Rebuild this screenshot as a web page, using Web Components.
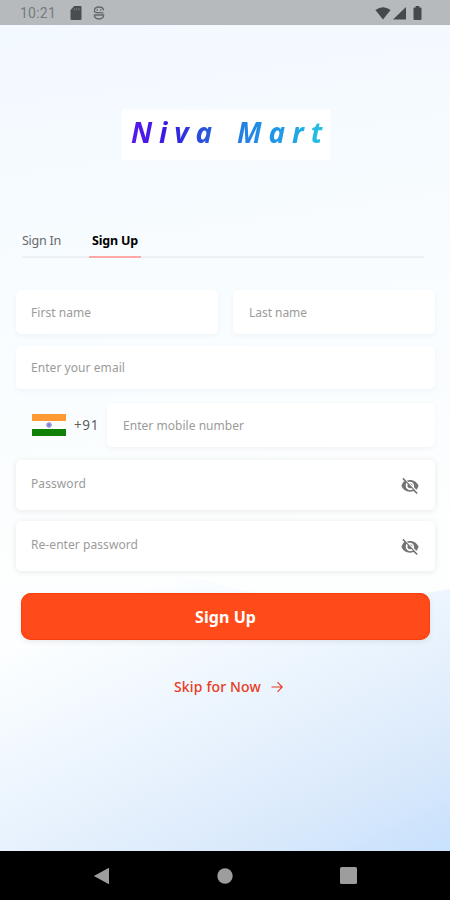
<!DOCTYPE html>
<html lang="en">
<head>
<meta charset="utf-8">
<title>Niva Mart</title>
<style>
html,body{margin:0;height:100%}
body{font-family:"Noto Sans","Open Sans",sans-serif;overflow:hidden}
</style>
</head>
<body>
<sign-up-screen></sign-up-screen>
<script>
const define = (name, html, setup) => {
  const template = document.createElement('template');
  template.innerHTML = html;
  customElements.define(name, class extends HTMLElement {
    constructor() {
      super();
      this.attachShadow({mode: 'open'}).append(template.content.cloneNode(true));
    }
    connectedCallback() { if (setup) setup(this, this.shadowRoot); }
  });
};

// One line of text whose tracking is adjusted to fill the given width.
define('fit-text', `<style>
:host{display:block;white-space:pre;flex:none}
span{display:inline-block}
</style><span><slot></slot></span>`, (el, root) => {
  const span = root.querySelector('span');
  const width = +el.getAttribute('width');
  const count = el.textContent.length;
  el.style.width = width + 'px';
  span.style.letterSpacing = '0px';
  span.style.letterSpacing = ((width - span.getBoundingClientRect().width) / count) + 'px';
});

define('status-bar', `<style>
:host{display:flex;box-sizing:border-box;height:25px;background:#b6babc;align-items:center;padding:1px 28px 0 20px;color:#777b7d;font:14px Roboto,sans-serif}
svg{display:block;flex:none}
.sd{margin-left:14px}.face{margin-left:11px}.wifi{margin-left:auto}.cell{margin-left:2px}.bat{margin-left:7px}
</style>
<fit-text width="36">10:21</fit-text>
<svg class="sd" width="12" height="14" viewBox="0 0 12 14"><path d="M4.2 0H10.5Q11.5 0 11.5 1V13Q11.5 14 10.5 14H1.5Q.5 14 .5 13V4Z" fill="#494d4f"/><path d="M4.4 2v2.5M6.7 2v2.5M9 2v2.5" stroke="#73777a" stroke-width="1"/></svg>
<svg class="face" width="12" height="14" viewBox="0 0 12 14" fill="none" stroke="#64686a" stroke-width="1.3"><path d="M1.5 6V4.5Q1.5 1 6 1t4.5 3.5M1.5 5.8Q3 7 6 6.7t4.5 .6M1.3 8.2Q1.2 13 6 13t4.7-4.8M1.3 9h9.4"/><path d="M4.3 3.2v1.6M7.7 3.2v1.6"/></svg>
<svg class="wifi" width="16" height="13" viewBox="0 0 16 13"><path d="M.4 3Q8-2.7 15.6 3L8 12.6Z" fill="#45494b"/></svg>
<svg class="cell" width="13" height="13" viewBox="0 0 13 13"><path d="M13 0V12.5H0Z" fill="#45494b"/></svg>
<svg class="bat" width="9" height="14" viewBox="0 0 9 14"><path d="M2.7 0h3.6v1.4H7.5Q8.5 1.4 8.5 2.4V13Q8.5 14 7.5 14h-6Q.5 14 .5 13V2.4Q.5 1.4 1.5 1.4h1.2Z" fill="#45494b"/></svg>`);

define('brand-logo', `<style>
:host{display:flex;box-sizing:border-box;width:208px;height:50px;margin:85px auto 0 122px;padding:1px 0 0 9px;background:#fff;box-shadow:0 0 5px #ffffffc0}
fit-text{font:italic 700 28px/42px "Noto Sans",sans-serif;word-spacing:4px;color:transparent;background:linear-gradient(90deg,#5a17ec 0,#321ce0 20%,#2864dc 42%,#248ae4 62%,#20a0e6 80%,#27c9e2);background-clip:text;-webkit-background-clip:text}
</style><fit-text width="198">Niva Mart</fit-text>`);

define('tab-bar', `<style>
:host{display:flex;box-sizing:border-box;height:31px;width:402px;margin:67px 0 1px 22px;border-bottom:2px solid #edf1f6;font-size:12.5px;line-height:25px;color:#686a6c;padding-top:1px}
.active{box-sizing:border-box;height:30px;width:52px;border-bottom:2px solid #ffa8a5;margin-left:28px;padding-left:3px;color:#000;font-weight:700}
</style><fit-text width="39">Sign In</fit-text><div class="active"><fit-text width="46">Sign Up</fit-text></div>`);

define('form-field', `<style>
:host{display:flex;box-sizing:border-box;background:#fff;border-radius:5px;height:44px;padding:1px 16px 0 15px;align-items:center;color:#9b9b9b;font-size:12px;line-height:18px;box-shadow:0 2px 5px rgba(60,80,90,.05)}
:host([secure]){height:50px;box-shadow:0 1px 6px rgba(0,0,0,.09);padding-bottom:4px}
svg{display:none;margin-left:auto;margin-top:4px}
:host([secure]) svg{display:block}
</style><slot></slot>
<svg width="18" height="18" viewBox="0 0 24 24" fill="#737373"><path d="M12 6.2c3.1 0 5.5 2.4 5.5 5.5 0 .7-.1 1.3-.3 1.9l3.4 3.4c1.2-1.2 2.1-2.9 2.8-5.3C21.6 7.2 17.2 4 12 4c-1.5 0-2.9.3-4.2.8l2.1 2c.7-.4 1.4-.6 2.1-.6ZM1.8 2.5 4.5 5.2C2.6 6.8 1.3 9 .6 11.7 2.3 16.4 6.7 19.5 12 19.5c1.7 0 3.2-.3 4.7-.9l4.2 4.2 1.4-1.4L3.2 1.1ZM7.1 7.8l2 2c-.3.6-.5 1.2-.5 1.9 0 1.9 1.5 3.4 3.4 3.4.7 0 1.3-.2 1.9-.5l2 2c-1.1.6-2.4 1-3.9 1-3.1 0-5.7-2.6-5.7-5.8 0-1.5.3-2.8.8-4ZM12 8.2l3.5 3.5c0-2-1.5-3.5-3.5-3.5Z"/></svg>`);

define('country-code', `<style>
:host{display:flex;align-items:center;gap:8px;width:91px;box-sizing:border-box;padding-left:16px;color:#5d5d5d;font-size:13.5px}
svg{display:block;flex:none}
</style><svg width="34" height="22" viewBox="0 0 34 22"><path fill="#fff" d="M0 0h34v22H0z"/><path fill="#ff9933" d="M0 0h34v7H0z"/><path fill="#118007" d="M0 15h34v7H0z"/><circle cx="17" cy="11" r="2.3" fill="#a7a7e8" stroke="#8585d4"/><circle cx="17" cy="11" r=".8" fill="#4646ae"/></svg><fit-text width="25">+91</fit-text>`);

define('primary-button', `<style>
:host{display:flex;height:47px;width:409px;margin:22px 0 0 21px;border-radius:10px;background:#ff4b19;color:#fff;box-shadow:inset 0 0 1px 1px #f8400f,0 2px 5px rgba(70,70,70,.11);align-items:center;justify-content:center;font-size:16px;font-weight:700;line-height:24px}
</style><slot></slot>`);

define('skip-link', `<style>
:host{display:flex;align-items:center;gap:10px;height:24px;margin:35px 0 0 174px;color:#e93b20;font-size:14px;font-weight:500;line-height:24px}
</style><slot></slot><svg width="12" height="12" viewBox="0 0 12 12" fill="none" stroke="currentColor" stroke-width="1.1"><path d="M.5 6h10.7M6.5 1.2 11.2 6l-4.7 4.8"/></svg>`);

define('nav-bar', `<style>
:host{display:flex;box-sizing:border-box;height:49px;background:#000;margin-top:auto;padding:0 93px;align-items:center;justify-content:space-between}
svg{display:block}
</style>
<svg width="17" height="18" viewBox="0 0 17 18"><path d="M16 .8v16.4L.8 9Z" fill="#9d9d9d"/></svg>
<svg width="16" height="16" viewBox="0 0 16 16"><circle cx="8" cy="8" r="7.7" fill="#9d9d9d"/></svg>
<svg width="17" height="17" viewBox="0 0 17 17"><rect width="17" height="17" rx="1.5" fill="#9d9d9d"/></svg>`);

define('sign-up-form', `<style>
:host{display:flex;flex-direction:column;margin:31px 15px 0 16px}
.row{display:grid;grid-template-columns:202px 202px;gap:15px}
.phone{display:flex;margin:14px 0 13px}
.phone form-field{flex:1}
.email{margin-top:12px;height:43px}
.again{margin-top:11px}
</style>
<div class="row"><form-field><fit-text width="60">First name</fit-text></form-field><form-field style="padding-left:16px"><fit-text width="58">Last name</fit-text></form-field></div>
<form-field class="email"><fit-text width="94">Enter your email</fit-text></form-field>
<div class="phone"><country-code></country-code><form-field style="padding-left:16px"><fit-text width="121">Enter mobile number</fit-text></form-field></div>
<form-field secure><fit-text width="55">Password</fit-text></form-field>
<form-field secure class="again"><fit-text width="107">Re-enter password</fit-text></form-field>`);

define('sign-up-screen', `<style>
:host{display:flex;flex-direction:column;box-sizing:border-box;width:450px;height:900px;position:relative;isolation:isolate;background:linear-gradient(172deg,#f1f8ff 0,#f6fbff 22%,#f9fdff 40%,#fdfefe 60%)}
.wave{position:absolute;z-index:-1;left:0;top:580px;width:450px;height:271px}
</style>
<svg class="wave" viewBox="0 0 450 271" preserveAspectRatio="none"><defs><linearGradient id="sky" gradientUnits="userSpaceOnUse" x1="29" y1="63" x2="182" y2="393"><stop offset="0" stop-color="#fcfeff"/><stop offset=".35" stop-color="#edf6fe"/><stop offset=".5" stop-color="#e7f1fd"/><stop offset=".76" stop-color="#d9e9fb"/><stop offset="1" stop-color="#c8e1fd"/></linearGradient></defs><path d="M0 0H205Q310 36 450 9V271H0Z" fill="url(#sky)"/></svg>
<status-bar></status-bar>
<brand-logo></brand-logo>
<tab-bar></tab-bar>
<sign-up-form></sign-up-form>
<primary-button><fit-text width="61">Sign Up</fit-text></primary-button>
<skip-link><fit-text width="87">Skip for Now</fit-text></skip-link>
<nav-bar></nav-bar>`);
</script>
</body>
</html>
